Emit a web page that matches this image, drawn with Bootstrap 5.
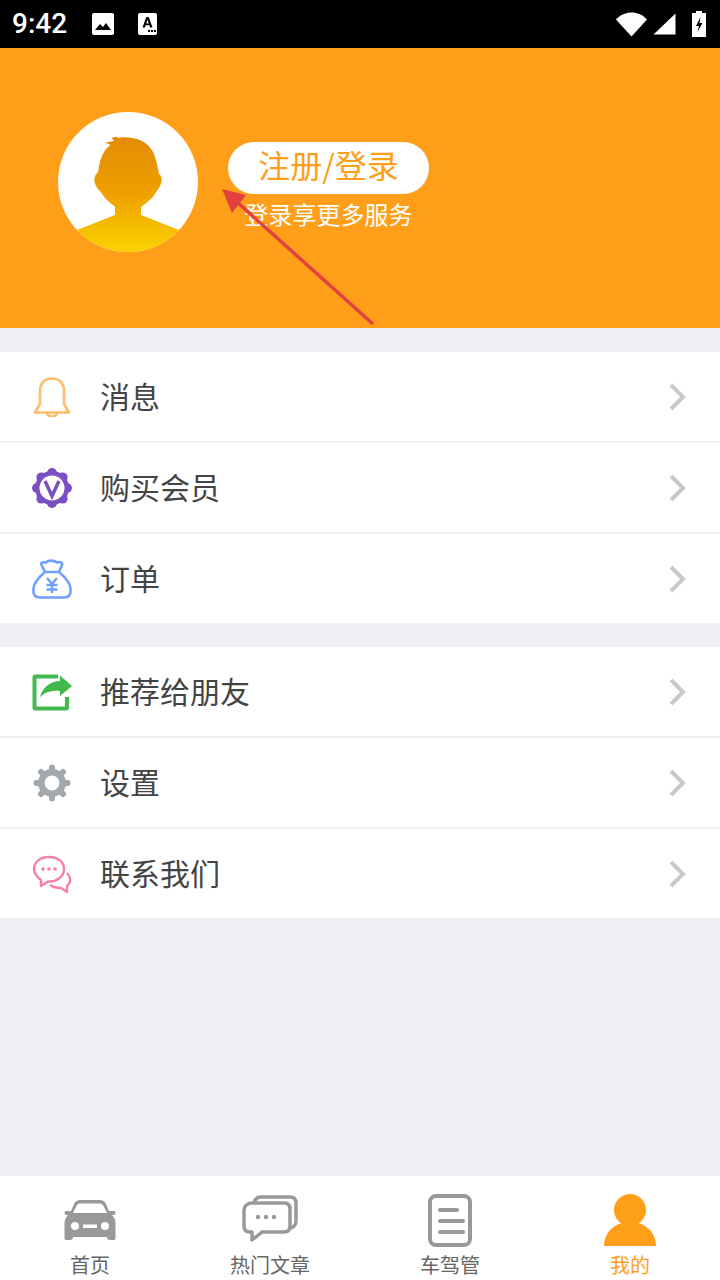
<!DOCTYPE html>
<html lang="zh">
<head>
<meta charset="utf-8">
<title>我的</title>
<link href="https://cdn.jsdelivr.net/npm/bootstrap@5.3.0/dist/css/bootstrap.min.css" rel="stylesheet">
<style>
html,body{height:100%;}
body{background:#efeff4;font-family:"Noto Sans CJK SC","Liberation Sans",sans-serif;color:#333;overflow:hidden;}
.phone{width:720px;height:1280px;}
.sbar{height:48px;background:#000;color:#fff;padding:0 14px 0 12px;}
.sclock{font-family:Roboto,"Liberation Sans",sans-serif;font-weight:500;font-size:28px;line-height:48px;width:79px;}
.sb-a{margin-left:22px;}
.sb-signal{margin-left:5px;}
.sb-batt{margin-left:16px;}
.hero{height:280px;background:#ff9f19;padding:64px 0 0 58px;position:relative;}
.avatar{width:140px;height:140px;display:block;}
.login{margin:30px 0 0 30px;width:201px;}
.pill{height:52px;border-radius:26px;background:#fff;color:#ff9f19;font-size:32px;line-height:44px;text-align:center;}
.subline{color:#fff;font-size:24px;line-height:32px;text-align:center;margin-top:4px;}
.arrow{position:absolute;left:0;top:0;pointer-events:none;}
.menu{margin-top:24px;border-radius:0;background:transparent;}
.menu .list-group-item{height:91px;padding:0 32px;border:0;border-bottom:2px solid #efeff4;gap:28px;font-size:30px;line-height:1;color:#444;}
.menu .list-group-item:last-child{height:89px;border-bottom:0;}
.menu .mlabel{padding-bottom:4px;}
.ico{width:40px;height:40px;flex:none;display:block;}
.chev{width:20px;height:30px;margin-left:auto;flex:none;}
.foot{height:104px;background:#fff;}
.fitem{width:180px;color:#666;font-size:20px;line-height:28px;height:104px;padding-top:18px;}
.fitem svg{height:56px;width:60px;display:block;}
.fitem span{margin-top:1px;}
.fitem.on{color:#ff9f19;}
</style>
</head>
<body>
<div class="phone d-flex flex-column">
  <div class="sbar d-flex align-items-center">
    <div class="sclock">9:42</div>
    <svg width="24" height="24" viewBox="0 0 24 24" class="d-block"><rect x="1" y="1" width="22" height="22" rx="2" fill="#fff"/><path d="M4 18l5-6 3 3 3-4 5 7z" fill="#000"/></svg>
    <svg width="22" height="24" viewBox="0 0 22 24" class="d-block sb-a"><rect x="1" y="1" width="19" height="22" rx="2" fill="#fff"/><path d="M5.500 15.500L9.300 5h2.400l3.800 10.500h-2.400l-.7-2.200h-3.800l-.7 2.200zM9.300 11.500h2.400L10.500 7.600z" fill="#000" fill-rule="evenodd"/><rect x="11" y="18" width="2" height="2" fill="#000"/><rect x="14" y="18" width="2" height="2" fill="#000"/><rect x="17" y="18" width="2" height="2" fill="#000"/></svg>
    <svg width="32" height="26" viewBox="0 0 32 26" class="d-block ms-auto"><path d="M0 8.500C4 4 10 1.500 15.500 1.500S27 4 31 8.500L15.500 25.500z" fill="#fff"/></svg>
    <svg width="23" height="22" viewBox="0 0 23 22" class="d-block sb-signal"><path d="M0.500 21.500L22.500 0.500V21.500z" fill="#fff"/></svg>
    <svg width="14" height="26" viewBox="0 0 14 26" class="d-block sb-batt"><path d="M4 0h6v2h4v24H0V2h4z" fill="#fff"/><path d="M8.500 6L4 15h3l-1.500 6L10.500 12H7.500z" fill="#000"/></svg>
  </div>

  <div class="hero d-flex align-items-start">
    <svg class="avatar" viewBox="0 0 140 140">
      <defs>
        <linearGradient id="skin" x1="0" y1="0" x2="0" y2="1"><stop offset="0" stop-color="#e38b04"/><stop offset="0.5" stop-color="#efa100"/><stop offset="1" stop-color="#fad300"/></linearGradient>
        <clipPath id="disc"><circle cx="70" cy="70" r="70"/></clipPath>
      </defs>
      <circle cx="70" cy="70" r="70" fill="#fff"/>
      <path clip-path="url(#disc)" fill="url(#skin)" d="M47.500 30.500L56 29L53.500 25.700L60 24.500L59 26C66 24.500 76 25 84 29C91 33 95 38 97 45C99 51 100 57 101 62C103 63 104 66 103.700 68C103.500 71 102.500 73 101.500 75C99 79 97 82 95 84.700C91 89 87 92 83 95V103L121 118L125 141H15L19 118L57 103V94.700C52 91 47 87 43.700 81.300C41 78 37 75 36.300 68C36.300 64 38 62 40.300 59.700C41 52 43 45 45.500 41C47.500 37 50 35 52.700 33z"/>
    </svg>
    <div class="login">
      <div class="pill">注册/登录</div>
      <div class="subline">登录享更多服务</div>
    </div>
    <svg class="arrow" width="720" height="280" viewBox="0 48 720 280"><path d="M237 202L373 324" stroke="#e34141" stroke-width="3.500"/><path d="M222 189L246 195L232 213z" fill="#e34141"/></svg>
  </div>

  <div class="list-group menu">
    <div class="list-group-item d-flex align-items-center">
      <svg class="ico" viewBox="0 0 40 40"><path d="M3 35.500L8 27V14C8 6 13 1.500 20 1.500S32 6 32 14V27L37 35.500z" fill="none" stroke="#fdbb6a" stroke-width="2.600" stroke-linejoin="round"/><path d="M15 35.500a5 4 0 0 0 10 0" fill="none" stroke="#fdbb6a" stroke-width="2.600"/></svg>
      <span class="mlabel">消息</span>
      <svg class="chev" viewBox="0 0 20 30"><path d="M3 3L15 15L3 27" fill="none" stroke="#c8c8cd" stroke-width="4"/></svg>
    </div>
    <div class="list-group-item d-flex align-items-center">
      <svg class="ico" viewBox="0 0 40 40"><g fill="#7a4fc0"><circle cx="20" cy="20" r="17"/><circle cx="20" cy="5" r="5"/><circle cx="20" cy="35" r="5"/><circle cx="5" cy="20" r="5"/><circle cx="35" cy="20" r="5"/><circle cx="9.400" cy="9.400" r="5"/><circle cx="30.600" cy="9.400" r="5"/><circle cx="9.400" cy="30.600" r="5"/><circle cx="30.600" cy="30.600" r="5"/></g><circle cx="20" cy="20" r="12.500" fill="#fff"/><path d="M13 13l7 15 7-15" fill="none" stroke="#7a4fc0" stroke-width="3.500"/></svg>
      <span class="mlabel">购买会员</span>
      <svg class="chev" viewBox="0 0 20 30"><path d="M3 3L15 15L3 27" fill="none" stroke="#c8c8cd" stroke-width="4"/></svg>
    </div>
    <div class="list-group-item d-flex align-items-center">
      <svg class="ico" viewBox="0 0 40 40"><path d="M13 13C7 18 1.300 24 1.300 31C1.300 36 4 38.500 8 38.500H32C36 38.500 38.700 36 38.700 31C38.700 24 33 18 27 13L30 6C31 3 27 2.500 25 3.500C22 1 16 1 14 3.500C12 3 8 3 9.500 6zM13 13H27" fill="none" stroke="#6f9fff" stroke-width="2.600" stroke-linejoin="round"/><path d="M15 19L20 25L25 19M20 25V34M14.500 26H25.500M14.500 30.500H25.500" fill="none" stroke="#6f9fff" stroke-width="2.400"/></svg>
      <span class="mlabel">订单</span>
      <svg class="chev" viewBox="0 0 20 30"><path d="M3 3L15 15L3 27" fill="none" stroke="#c8c8cd" stroke-width="4"/></svg>
    </div>
  </div>

  <div class="list-group menu">
    <div class="list-group-item d-flex align-items-center">
      <svg class="ico" viewBox="0 0 40 40"><path d="M26 4.500H3.500Q2.500 4.500 2.500 5.500V35.500Q2.500 36.500 3.500 36.500H34Q35 36.500 35 35.500V25" fill="none" stroke="#42b94c" stroke-width="4"/><path d="M28 3.500L40 14L28 24V19C20 18 13 20 8 25C10 16 18 9 28 9z" fill="#42b94c"/></svg>
      <span class="mlabel">推荐给朋友</span>
      <svg class="chev" viewBox="0 0 20 30"><path d="M3 3L15 15L3 27" fill="none" stroke="#c8c8cd" stroke-width="4"/></svg>
    </div>
    <div class="list-group-item d-flex align-items-center">
      <svg class="ico" viewBox="0 0 40 40"><circle cx="20" cy="20" r="10.700" fill="none" stroke="#a1a8ae" stroke-width="6.500"/><path d="M20 7V4.500M20 33V35.500M7 20H4.500M33 20H35.500M10.800 10.800L9 9M29.200 29.200L31 31M29.200 10.800L31 9M10.800 29.200L9 31" stroke="#a1a8ae" stroke-width="6" stroke-linecap="round"/></svg>
      <span class="mlabel">设置</span>
      <svg class="chev" viewBox="0 0 20 30"><path d="M3 3L15 15L3 27" fill="none" stroke="#c8c8cd" stroke-width="4"/></svg>
    </div>
    <div class="list-group-item d-flex align-items-center">
      <svg class="ico" viewBox="0 0 40 40"><path d="M17 3C8 3 2 8 2 15C2 20 5 23 9 26L9 32L16 27.500C24 28 32 23 32 15C32 8 26 3 17 3z" fill="none" stroke="#fb7fa5" stroke-width="2.400" stroke-linejoin="round"/><circle cx="11" cy="15" r="1.800" fill="#fb7fa5"/><circle cx="17" cy="15" r="1.800" fill="#fb7fa5"/><circle cx="23" cy="15" r="1.800" fill="#fb7fa5"/><path d="M35 19C38 22 39 26 37 30L35 32V38L29 34C25 34 21 33 18 31" fill="none" stroke="#fb7fa5" stroke-width="2.400" stroke-linejoin="round"/></svg>
      <span class="mlabel">联系我们</span>
      <svg class="chev" viewBox="0 0 20 30"><path d="M3 3L15 15L3 27" fill="none" stroke="#c8c8cd" stroke-width="4"/></svg>
    </div>
  </div>

  <div class="foot d-flex mt-auto">
    <div class="fitem d-flex flex-column align-items-center">
      <svg viewBox="0 0 60 56"><path d="M14 10C15 7 18 6 20 6H40C42 6 45 7 46 10L49 17H54C56 17 56 20 54 21H52C55 24 55.500 27 55.500 30V44C55.500 46 54 46 53 46H50C48 46 47 45 47 43H13C13 45 12 46 10 46H7C6 46 4.500 46 4.500 44V30C4.500 27 5 24 8 21H6C4 20 4 17 6 17H11z" fill="#999"/><path d="M13 19L17 11C18 10 19 9.500 20 9.500H40C41 9.500 42 10 43 11L47 19z" fill="#fff"/><circle cx="15" cy="32" r="4" fill="#fff"/><circle cx="45" cy="32" r="4" fill="#fff"/><rect x="23" y="30.500" width="14" height="3.500" fill="#fff"/></svg>
      <span>首页</span>
    </div>
    <div class="fitem d-flex flex-column align-items-center">
      <svg viewBox="0 0 60 56"><path d="M14 9C15 5 18 3 21 3H50C54 3 56 5 56 9V27C56 31 54 33 51 34" fill="none" stroke="#999" stroke-width="3.500"/><path d="M12 9H44C48 9 50 11 50 15V32C50 36 48 38 44 38H22L12 46V38H10C6 38 4 36 4 32V17C4 12 7 9 12 9z" fill="#fff" stroke="#999" stroke-width="3.500" stroke-linejoin="round"/><circle cx="18" cy="23" r="2.200" fill="#999"/><circle cx="26" cy="23" r="2.200" fill="#999"/><circle cx="34" cy="23" r="2.200" fill="#999"/></svg>
      <span>热门文章</span>
    </div>
    <div class="fitem d-flex flex-column align-items-center">
      <svg viewBox="0 0 60 56"><rect x="10" y="2" width="40" height="49" rx="6" fill="none" stroke="#999" stroke-width="4"/><path d="M20 16H37M20 27H43M20 38H43" stroke="#999" stroke-width="4" stroke-linecap="round"/></svg>
      <span>车驾管</span>
    </div>
    <div class="fitem on d-flex flex-column align-items-center">
      <svg viewBox="0 0 60 56"><circle cx="30" cy="16" r="16" fill="#ff9f19"/><path d="M4 52C4 40 13 28 30 28S56 40 56 52z" fill="#ff9f19"/></svg>
      <span>我的</span>
    </div>
  </div>
</div>
<script src="https://cdn.jsdelivr.net/npm/bootstrap@5.3.0/dist/js/bootstrap.bundle.min.js"></script>
</body>
</html>
